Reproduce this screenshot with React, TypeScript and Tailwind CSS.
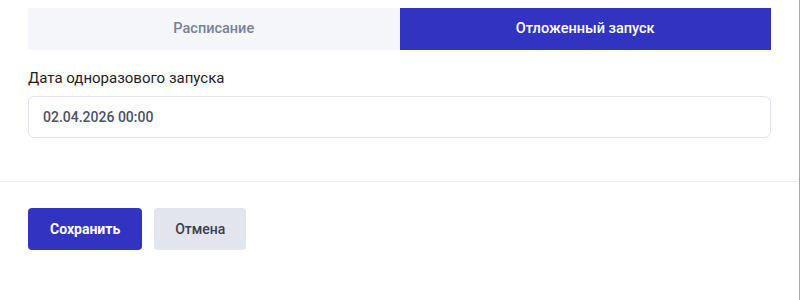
import React, { useState } from "react";

export default function App() {
  const [tab, setTab] = useState<"schedule" | "delayed">("delayed");
  const [date, setDate] = useState("02.04.2026 00:00");

  return (
    <div
      className="w-[800px] h-[300px] bg-white border-r border-[#a8a8ad] overflow-hidden"
      style={{ fontFamily: "Roboto, 'Noto Sans', sans-serif" }}
    >
      <div className="px-[28px] pt-[8px] pb-[43px]">
        <div className="grid grid-cols-2 h-[42px]">
          <button
            onClick={() => setTab("schedule")}
            className={`text-[14.5px] font-medium ${
              tab === "schedule" ? "bg-[#3333c2] text-white" : "bg-[#f4f6fa] text-[#7b8094]"
            }`}
          >
            Расписание
          </button>
          <button
            onClick={() => setTab("delayed")}
            className={`text-[14.5px] font-medium ${
              tab === "delayed" ? "bg-[#3333c2] text-white" : "bg-[#f4f6fa] text-[#7b8094]"
            }`}
          >
            Отложенный запуск
          </button>
        </div>

        <label className="block mt-[18px] text-[15px] leading-[20px] text-[#1f2129]">
          Дата одноразового запуска
        </label>
        <input
          value={date}
          onChange={(e) => setDate(e.target.value)}
          className="mt-[8px] w-full h-[42px] rounded-md border border-[#e3e4ef] px-[14px] text-[14px] font-medium text-[#4b5068] outline-none"
        />
      </div>

      <div className="border-t border-[#eeeef2] mr-[1px]" />

      <div className="flex gap-[12px] px-[28px] pt-[26px]">
        <button className="h-[42px] px-[22px] rounded-[4px] bg-[#3333c2] text-white text-[14px] font-bold">
          Сохранить
        </button>
        <button className="h-[42px] px-[21px] rounded-[4px] bg-[#e3e5ee] text-[#3a3d4a] text-[14px] font-medium">
          Отмена
        </button>
      </div>
    </div>
  );
}
